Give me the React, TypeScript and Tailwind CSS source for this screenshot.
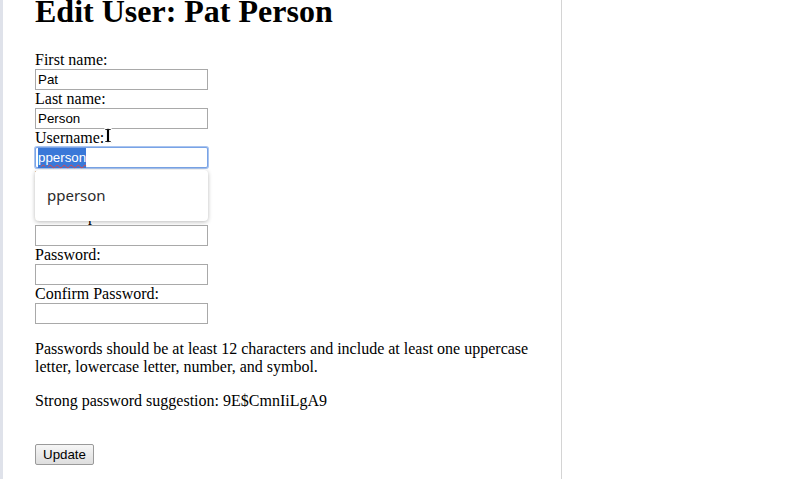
import React from 'react'

const serif = { fontFamily: '"Liberation Serif", "Times New Roman", serif' }

function Field({ label, value, children }: { label: string; value?: string; children?: React.ReactNode }) {
  return (
    <div>
      <label className="block h-[18px] leading-[18px] text-[16px]">{label}</label>
      {children ?? (
        <input
          readOnly
          defaultValue={value}
          className="block h-[21px] w-[173px] border border-[#a9a9a9] bg-white px-[2px] text-[13.33px] leading-[15px] text-black outline-none font-['Liberation_Sans',Arial,sans-serif]"
        />
      )}
    </div>
  )
}

// text cursor sitting over the form
function IBeam() {
  return (
    <svg width="10" height="17" viewBox="0 0 10 17" className="absolute left-[100px] top-[127px]">
      <path
        d="M1.5 1.5h3l0.5 0.6 0.5-0.6h3v1.6H6.6v10.8h1.9v1.6h-3L5 14.9l-0.5 0.6h-3v-1.6h1.9V3.1H1.5z"
        fill="#000"
        stroke="#fff"
        strokeWidth="1"
      />
    </svg>
  )
}

export default function App() {
  return (
    <div className="flex h-[479px] w-[796px] overflow-hidden bg-white text-black" style={serif}>
      <div className="w-[3px] shrink-0 bg-[#dfe2ea]" />
      <div className="relative w-[559px] shrink-0 border-r border-[#d4d4d4] pl-[32px]">
        <h1 className="-mt-[7px] mb-[21px] text-[32px] font-bold leading-[37px]">Edit User: Pat Person</h1>

        <Field label="First name:" value="Pat" />
        <Field label="Last name:" value="Person" />
        <Field label="Username:">
          <div className="relative">
            <div className="flex h-[21px] w-[173px] items-center rounded-[2px] border border-[#79a3e6] bg-white px-[2px] shadow-[0_0_0_1px_#a9c4ef] text-[13.33px] font-['Liberation_Sans',Arial,sans-serif]">
              <span className="bg-[#3a78d8] text-white underline decoration-wavy decoration-[#e04848] decoration-1 underline-offset-2">pperson</span>
            </div>
            <div className="absolute left-0 top-[23px] z-10 flex h-[51px] w-[173px] items-center rounded-[4px] bg-white pl-[12px] text-[15px] text-[#2b2b2b] shadow-[0_1px_4px_rgba(0,0,0,0.28)] font-['Noto_Sans',sans-serif]">
              pperson
            </div>
          </div>
        </Field>
        <Field label="Email:" value="" />
        <Field label="Current password:" value="" />
        <Field label="Password:" value="" />
        <Field label="Confirm Password:" value="" />

        <p className="mt-[16px] w-[500px] text-[16px] leading-[18px]">
          Passwords should be at least 12 characters and include at least one uppercase letter, lowercase letter, number, and symbol.
        </p>
        <p className="mt-[16px] text-[16px] leading-[18px]">Strong password suggestion: 9E$CmnIiLgA9</p>

        <button className="mt-[34px] h-[21px] rounded-[2px] border border-[#9a9a9a] bg-gradient-to-b from-[#f6f6f6] to-[#dedede] px-[7px] text-[13.33px] leading-[15px] text-black font-['Liberation_Sans',Arial,sans-serif]">
          Update
        </button>

        <IBeam />
      </div>
      <div className="flex-1 bg-white" />
    </div>
  )
}
